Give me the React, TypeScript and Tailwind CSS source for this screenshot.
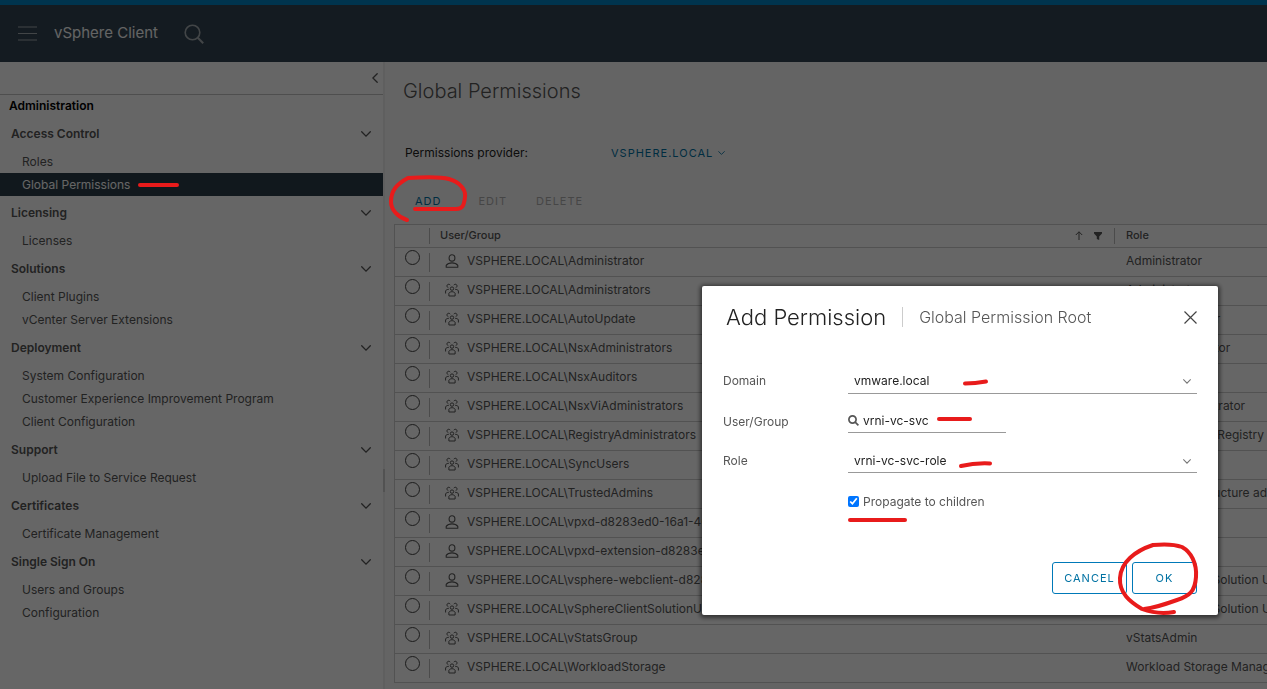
import { useState } from 'react';
import type { ReactNode } from 'react';
import clsx from 'clsx';

const navGroups = [
  { title: 'Access Control', items: ['Roles', 'Global Permissions'] },
  { title: 'Licensing', items: ['Licenses'] },
  { title: 'Solutions', items: ['Client Plugins', 'vCenter Server Extensions'] },
  {
    title: 'Deployment',
    items: ['System Configuration', 'Customer Experience Improvement Program', 'Client Configuration'],
  },
  { title: 'Support', items: ['Upload File to Service Request'] },
  { title: 'Certificates', items: ['Certificate Management'] },
  { title: 'Single Sign On', items: ['Users and Groups', 'Configuration'] },
];

const permissions = [
  { kind: 'user', name: 'Administrator', role: 'Administrator' },
  { kind: 'group', name: 'Administrators', role: 'Administrator' },
  { kind: 'group', name: 'AutoUpdate', role: 'AutoUpdateUser' },
  { kind: 'group', name: 'NsxAdministrators', role: 'NSX Administrator' },
  { kind: 'group', name: 'NsxAuditors', role: 'NSX Auditor' },
  { kind: 'group', name: 'NsxViAdministrators', role: 'NSX VI Administrator' },
  { kind: 'group', name: 'RegistryAdministrators', role: 'Content Library Registry administrator' },
  { kind: 'group', name: 'SyncUsers', role: 'SyncUsers' },
  { kind: 'group', name: 'TrustedAdmins', role: 'Trusted Infrastructure administrator' },
  { kind: 'user', name: 'vpxd-d8283ed0-16a1-46a1', role: 'Administrator' },
  { kind: 'user', name: 'vpxd-extension-d8283ed0', role: 'Administrator' },
  { kind: 'user', name: 'vsphere-webclient-d8283ed0', role: 'vSphere Client Solution User' },
  { kind: 'group', name: 'vSphereClientSolutionUsers', role: 'vSphere Client Solution User' },
  { kind: 'group', name: 'vStatsGroup', role: 'vStatsAdmin' },
  { kind: 'group', name: 'WorkloadStorage', role: 'Workload Storage Management' },
];

function Chevron({ className }: { className?: string }) {
  return (
    <svg viewBox="0 0 10 6" className={className} fill="none" stroke="currentColor" strokeLinecap="round" aria-hidden="true">
      <path d="M0.7 0.8 5 5.1 9.3 0.8" strokeWidth="1.3" />
    </svg>
  );
}

function UserIcon() {
  return (
    <svg viewBox="0 0 14 14" className="size-3.5 shrink-0" fill="none" stroke="currentColor" strokeWidth="1.1" aria-hidden="true">
      <ellipse cx="7" cy="3.9" rx="2.9" ry="3.2" />
      <path d="M1.2 13.3v-1.900C2.500 9.700 4.600 8.900 7 8.900s4.500.8 5.800 2.500v1.900z" strokeLinejoin="round" />
    </svg>
  );
}

function GroupIcon() {
  return (
    <svg viewBox="0 0 14 14" className="size-3.5 shrink-0" fill="none" stroke="currentColor" aria-hidden="true">
      <circle cx="7" cy="5.600" r="1.700" />
      <path d="M3.900 13V10.200C4.600 9.200 5.700 8.700 7 8.700s2.400.5 3.100 1.500V13z" />
      <path d="M5.200 2.200A1.700 1.700 0 1 0 3.300 4.600M8.800 2.200a1.700 1.700 0 1 1 1.900 2.400" />
      <path d="M3.800 6.400C2.500 6.200 1.200 6.800.6 7.800v2.700M10.200 6.400c1.300-.2 2.600.4 3.200 1.400v2.700" />
    </svg>
  );
}

// Red pen stroke laid over the screen
function Mark({ className, viewBox, children }: { className: string; viewBox: string; children: ReactNode }) {
  return (
    <svg
      viewBox={viewBox}
      className={clsx('pointer-events-none absolute z-20 overflow-visible', className)}
      fill="none"
      stroke="#e81b1b"
      strokeWidth="4"
      strokeLinecap="round"
      strokeLinejoin="round"
      aria-hidden="true"
    >
      {children}
    </svg>
  );
}

function Header() {
  return (
    <header className="flex h-[62px] shrink-0 items-center border-t-[5px] border-[#0082c2] bg-[#334553] pl-[18px]">
      <button aria-label="Menu" className="text-[#a6adb2]">
        <svg viewBox="0 0 19 15" className="h-[15px] w-[19px]" stroke="currentColor" strokeWidth="1.200" aria-hidden="true">
          <path d="M0 1h19M0 7.500h19M0 14h19" />
        </svg>
      </button>
      <h1 className="ml-[17px] text-[15px] text-[#fafafa]">vSphere Client</h1>
      <button aria-label="Search" className="ml-[26px] text-[#a6adb2]">
        <svg viewBox="0 0 20 20" className="size-5" fill="none" stroke="currentColor" strokeWidth="1.600" aria-hidden="true">
          <circle cx="8.500" cy="8.500" r="7.300" />
          <path d="m13.800 13.800 5.400 5.400" strokeWidth="2" />
        </svg>
      </button>
    </header>
  );
}

function Sidebar() {
  return (
    <aside className="w-[383px] shrink-0 bg-white text-xs text-[#565656]">
      <div className="flex h-[33px] items-center justify-end border-b border-[#c4c4c4] pr-[3px]">
        <button aria-label="Collapse">
          <Chevron className="h-1.5 w-2.5 rotate-90" />
        </button>
      </div>
      <h2 className="flex h-[22px] items-center pl-[9px] font-semibold text-black">Administration</h2>
      <nav>
        {navGroups.map((group) => (
          <section key={group.title}>
            <button className="flex h-[33px] w-full items-center justify-between pr-3 pl-[11px] font-semibold">
              {group.title}
              <Chevron className="h-1.5 w-2.5" />
            </button>
            <ul>
              {group.items.map((item) => (
                <li key={item}>
                  <a
                    href="#"
                    className={clsx(
                      'relative flex h-[23px] items-center pl-[22px]',
                      item === 'Global Permissions' && 'bg-[#2c3e49] text-white'
                    )}
                  >
                    {item}
                    {item === 'Global Permissions' && (
                      <Mark className="top-2.5 left-[138px] h-1 w-[41px]" viewBox="0 0 41 4">
                        <path d="M2 2h37" />
                      </Mark>
                    )}
                  </a>
                </li>
              ))}
            </ul>
          </section>
        ))}
      </nav>
    </aside>
  );
}

function PermissionsTable() {
  return (
    <table className="w-full table-fixed border-separate border-spacing-0 border-t border-l border-[#ccc] bg-white text-xs whitespace-nowrap">
      <colgroup>
        <col className="w-[35px]" />
        <col />
        <col className="w-[152px]" />
      </colgroup>
      <thead>
        <tr className="text-left text-[11px]">
          <th className="h-[23px] border-b border-[#ccc] p-0" aria-label="Select">
            <span className="block h-4 border-r border-[#bbb]" />
          </th>
          <th className="border-b border-[#ccc] p-0">
            <div className="flex h-4 items-center border-r border-[#bbb] pr-3 pb-0.5 pl-2.5 font-medium">
              User/Group
              <svg viewBox="0 0 8 9" className="ml-auto h-[9px] w-2" fill="none" stroke="currentColor" aria-hidden="true">
                <path d="M4 9V.8M.8 4 4 .8 7.200 4" />
              </svg>
              <svg viewBox="0 0 8 8" className="ml-[11px] size-2 translate-y-px" fill="currentColor" aria-hidden="true">
                <path d="M0 0h8v1.500L5.200 4.400V8L2.800 7V4.400L0 1.500z" />
              </svg>
            </div>
          </th>
          <th className="border-b border-[#ccc] pt-0 pr-0 pb-0.5 pl-[11px] font-medium">Role</th>
        </tr>
      </thead>
      <tbody>
        {permissions.map((row) => (
          <tr key={row.name}>
            <td className="h-[29px] border-b border-[#ccc] p-0">
              <div className="flex h-[19px] items-start border-r border-[#bbb] pl-2.5">
                <input
                  type="radio"
                  name="permission"
                  aria-label={row.name}
                  className="-mt-[3px] size-[15px] appearance-none rounded-full border border-[#444]"
                />
              </div>
            </td>
            <td className="overflow-hidden border-b border-[#ccc] pt-0 pr-0 pb-0.5 pl-[15px]">
              <div className="flex items-center gap-2">
                {row.kind === 'user' ? <UserIcon /> : <GroupIcon />}
                {'VSPHERE.LOCAL\\' + row.name}
              </div>
            </td>
            <td className="overflow-hidden border-b border-[#ccc] pt-0 pr-0 pb-0.5 pl-[11px]">{row.role}</td>
          </tr>
        ))}
      </tbody>
    </table>
  );
}

function Content() {
  return (
    <main className="min-w-0 flex-1 overflow-hidden bg-[#fafafa] pl-[9px] text-[#565656]">
      <h2 className="pt-4 pl-[9px] text-xl leading-[26px] font-light">Global Permissions</h2>
      <div className="mt-9 flex items-center pl-[11px] text-xs leading-[26px]">
        <span className="w-[206px] text-[#222]">Permissions provider:</span>
        <button className="flex items-center gap-[5px] text-[11px] tracking-[1px] text-[#0072a3]">
          VSPHERE.LOCAL
          <Chevron className="h-1 w-[7px]" />
        </button>
      </div>
      <div className="relative mt-3 flex h-[46px] items-center gap-[37px] pl-[21px] text-[11px] tracking-[1px]">
        <button className="text-[#0072a3]">ADD</button>
        <button disabled className="text-[#b0b0b0]">EDIT</button>
        <button disabled className="-ml-2 text-[#b0b0b0]">DELETE</button>
        <Mark className="-top-1 -left-[5px] h-12 w-[78px]" viewBox="389 174 78 48">
          <path d="M407 220C398 217 391 210 391 202C391 190 397 184 408 178C423 177 442 177 449 179C460 182 466 190 465 197C464 205 463 209 456 209H415" />
        </Mark>
      </div>
      <PermissionsTable />
    </main>
  );
}

function SelectField({ id, label, value }: { id: string; label: string; value: string }) {
  return (
    <>
      <label htmlFor={id}>{label}</label>
      <div className="relative border-b border-[#999]">
        <select id={id} className="h-[23px] w-full appearance-none bg-transparent pl-1.5 text-xs text-[#222]">
          <option>{value}</option>
        </select>
        <Chevron className="pointer-events-none absolute top-2.5 right-1.5 h-[5px] w-2 text-[#777]" />
      </div>
    </>
  );
}

function AddPermissionDialog() {
  const [account, setAccount] = useState('vrni-vc-svc');

  return (
    <div className="fixed inset-0 z-10 flex items-end justify-end bg-black/60 pr-[49px] pb-[74px]">
      <div
        role="dialog"
        aria-label="Add Permission"
        className="w-[516px] rounded-xs bg-white pt-[15px] pr-[21px] pb-[21px] pl-[21px] text-[#565656] shadow-[0_1px_4px_2px_rgba(0,0,0,0.5)]"
      >
        <div className="flex h-8 items-center pl-[3px]">
          <h2 className="text-[22px] font-light text-[#222]">Add Permission</h2>
          <span className="ml-4 border-l border-[#ccc] pl-4 text-base leading-5 font-light text-[#565656]">
            Global Permission Root
          </span>
          <button aria-label="Close" className="ml-auto">
            <svg viewBox="0 0 13 13" className="size-[13px]" stroke="#444" strokeWidth="1.200" aria-hidden="true">
              <path d="m.5.5 12 12M12.500.5l-12 12" />
            </svg>
          </button>
        </div>

        <form className="mt-9 grid grid-cols-[125px_1fr] gap-y-4 text-xs leading-[23px]">
          <div className="relative col-span-2 grid grid-cols-subgrid">
            <SelectField id="domain" label="Domain" value="vmware.local" />
            <Mark className="top-2.5 left-60 h-[7px] w-[25px]" viewBox="0 0 25 7">
              <path d="M2 4.500Q12 4.500 23 2.500" />
            </Mark>
          </div>
          <div className="relative col-span-2 grid grid-cols-subgrid">
            <label htmlFor="account">User/Group</label>
            <div className="flex h-[23px] w-[158px] items-center gap-1 border-b border-[#999]">
              <svg viewBox="0 0 11 11" className="size-[11px] shrink-0" fill="none" stroke="#565656" strokeWidth="1.700" aria-hidden="true">
                <circle cx="4.500" cy="4.500" r="3.600" />
                <path d="m7.200 7.200 3.200 3.200" />
              </svg>
              <input
                id="account"
                value={account}
                onChange={(e) => setAccount(e.target.value)}
                className="min-w-0 flex-1 text-[#222] outline-none"
              />
            </div>
            <Mark className="top-[7px] left-[214px] h-1 w-[35px]" viewBox="0 0 35 4">
              <path d="M2 2h31" />
            </Mark>
          </div>
          <div className="relative col-span-2 grid grid-cols-subgrid">
            <SelectField id="role" label="Role" value="vrni-vc-svc-role" />
            <Mark className="top-3 left-[236px] h-2 w-[33px]" viewBox="0 0 33 8">
              <path d="M2 5Q16 1.800 31 2.500" />
            </Mark>
          </div>
          <div className="relative col-start-2 flex h-6 items-center gap-1">
            <input id="propagate" type="checkbox" defaultChecked className="size-[11px] accent-[#0075ff]" />
            <label htmlFor="propagate">Propagate to children</label>
            <Mark className="-bottom-[9px] left-0 h-1 w-[59px]" viewBox="0 0 59 4">
              <path d="M2 2h55" />
            </Mark>
          </div>
        </form>

        <div className="relative mt-[49px] flex justify-end gap-[5px] text-[11px] tracking-[1px] text-[#0072a3]">
          <button className="h-8 w-[75px] rounded-[3px] border border-[#0079b8]">CANCEL</button>
          <button className="h-8 w-[65px] rounded-[3px] border border-[#0079b8]">OK</button>
          <Mark className="-top-[19px] right-[-1px] h-[72px] w-20" viewBox="1118 543 80 72">
            <path d="M1174 612C1162 614 1150 612 1142 609C1130 602 1119 593 1120 578C1121 562 1135 551 1153 545C1163 544 1174 544 1182 547C1191 552 1197 563 1196 577C1195 592 1189 596 1177 600C1166 604 1154 608 1144 609" />
          </Mark>
        </div>
      </div>
    </div>
  );
}

export default function App() {
  return (
    <div className="flex h-screen flex-col overflow-hidden font-['Inter','Liberation_Sans',sans-serif]">
      <Header />
      <div className="flex min-h-0 flex-1">
        <Sidebar />
        <div className="flex w-0.5 shrink-0 items-center bg-[#eee]">
          <span className="mt-[210px] h-[23px] w-full bg-[#ccc]" />
        </div>
        <Content />
      </div>
      <AddPermissionDialog />
    </div>
  );
}
